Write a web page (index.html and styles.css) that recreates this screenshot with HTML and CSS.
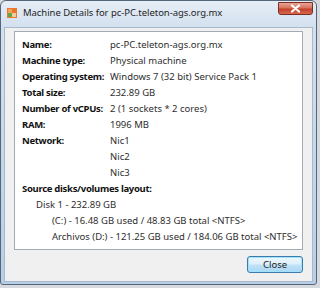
FILE: index.html
```html
<!DOCTYPE html>
<html>
<head>
<meta charset="utf-8">
<link rel="stylesheet" href="styles.css">
</head>
<body>
<div class="window">
  <div class="titlebar">
    <svg class="app-icon" width="10" height="10" viewBox="0 0 10 10">
      <rect x="0" y="0" width="10" height="10" fill="#e9782d"/>
      <rect x="1" y="1" width="4" height="4" fill="#f6a15a"/>
      <rect x="5" y="5" width="4" height="4" fill="#f3c9a0"/>
      <rect x="1" y="5" width="4" height="4" fill="#5fa843"/>
    </svg>
    <span class="title">Machine Details for pc-PC.teleton-ags.org.mx</span>
    <div class="close-x">
      <svg width="11" height="9" viewBox="0 0 11 9">
        <path d="M2 1.5 L9 7.5 M9 1.5 L2 7.5" stroke="#fff" stroke-width="2.2" stroke-linecap="round"/>
      </svg>
    </div>
  </div>
  <div class="panel">
    <div class="details">
      <div class="label">Name:</div><div class="value">pc-PC.teleton-ags.org.mx</div>
      <div class="label">Machine type:</div><div class="value">Physical machine</div>
      <div class="label">Operating system:</div><div class="value">Windows 7 (32 bit) Service Pack 1</div>
      <div class="label">Total size:</div><div class="value">232.89 GB</div>
      <div class="label">Number of vCPUs:</div><div class="value">2 (1 sockets * 2 cores)</div>
      <div class="label">RAM:</div><div class="value">1996 MB</div>
      <div class="label">Network:</div><div class="value">Nic1</div>
      <div class="label"></div><div class="value">Nic2</div>
      <div class="label"></div><div class="value">Nic3</div>
      <div class="label wide">Source disks/volumes layout:</div>
      <div class="value wide indent1">Disk 1 - 232.89 GB</div>
      <div class="value wide indent2">(C:) - 16.48 GB used / 48.83 GB total &lt;NTFS&gt;</div>
      <div class="value wide indent2">Archivos (D:) - 121.25 GB used / 184.06 GB total &lt;NTFS&gt;</div>
    </div>
    <div class="footer">
      <button class="btn">Close</button>
    </div>
  </div>
</div>
</body>
</html>
```
FILE: styles.css
```css
html, body {
  margin: 0;
  padding: 0;
}
body {
  width: 320px;
  height: 288px;
  overflow: hidden;
  background: #d6dadf;
  font-family: "Noto Sans", "Open Sans", sans-serif;
  font-size: 9.5px;
  color: #1a1a1a;
}
.window {
  box-sizing: border-box;
  width: 317px;
  height: 285px;
  border: 1px solid #56667a;
  border-radius: 6px 6px 3px 3px;
  background: linear-gradient(180deg, #e6edf6 0px, #d3e0ef 26px, #c4d6eb 60%, #b9cee7 100%);
  padding: 0 3px 2px 3px;
  display: flex;
  flex-direction: column;
}
.titlebar {
  height: 26px;
  display: flex;
  align-items: center;
  padding-bottom: 3px;
  box-sizing: border-box;
}
.app-icon {
  margin-left: 3px;
  margin-right: 6px;
  flex: none;
}
.title {
  color: #1e1e1e;
  font-size: 9.5px;
  line-height: 14px;
  letter-spacing: -0.05px;
}
.close-x {
  margin-left: auto;
  align-self: flex-start;
  margin-top: 1px;
  width: 35px;
  height: 13px;
  box-sizing: border-box;
  border: 1px solid #7b2d22;
  border-radius: 0 0 3px 3px;
  background: linear-gradient(180deg, #e9a596 0%, #d8735f 45%, #c2402a 55%, #d8694f 100%);
  display: flex;
  align-items: center;
  justify-content: center;
}
.panel {
  flex: 1;
  background: #f0f0f0;
  border: 1px solid #a9b9cc;
  padding: 3px 9px 8px 9px;
  display: flex;
  flex-direction: column;
}
.details {
  background: #fff;
  border: 1px solid #a3aab4;
  padding: 5px 7px 4px 7px;
  display: grid;
  grid-template-columns: 88px 1fr;
  line-height: 16px;
  white-space: nowrap;
}
.label {
  font-weight: bold;
  color: #111;
  letter-spacing: -0.3px;
}
.value {
  color: #2e2e2e;
}
.wide {
  grid-column: 1 / 3;
}
.indent1 {
  padding-left: 14px;
}
.indent2 {
  padding-left: 30px;
}
.footer {
  margin-top: 6px;
  display: flex;
  justify-content: flex-end;
}
.btn {
  width: 56px;
  height: 17px;
  box-sizing: border-box;
  border: 1px solid #3d7bad;
  border-radius: 3px;
  background: linear-gradient(180deg, #eef7fd 0%, #dcf0fb 48%, #c1e3f8 52%, #aad6f2 100%);
  box-shadow: inset 0 0 0 1px #9ee3fb;
  font-family: "Noto Sans", "Open Sans", sans-serif;
  font-size: 9.5px;
  color: #222;
  padding: 0;
  line-height: 15px;
}
```
